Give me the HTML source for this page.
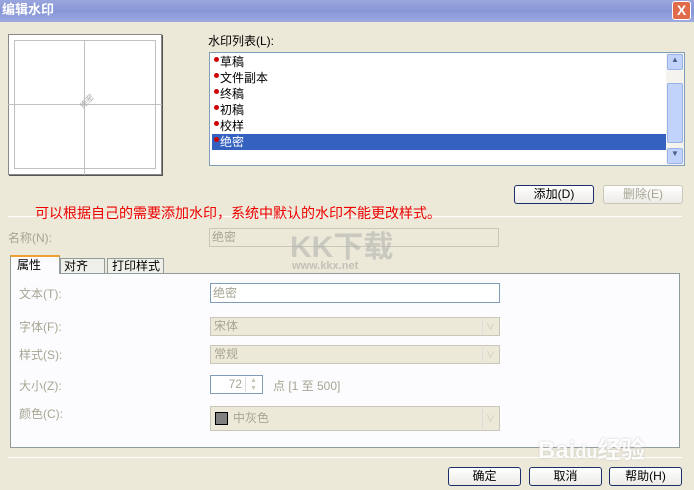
<!DOCTYPE html>
<html><head><meta charset="utf-8"><style>
*{margin:0;padding:0;box-sizing:border-box}
body{width:694px;height:490px;overflow:hidden;background:#ece9d8;font-family:"Liberation Sans","Noto Sans CJK SC",sans-serif;font-size:12px;color:#000;position:relative}
.a{position:absolute}
.title{left:0;top:0;width:694px;height:22px;background:linear-gradient(#9aa6dc,#8796d8 50%,#9eabe0);color:#fff;font-weight:bold;font-size:13px;line-height:20px;padding-left:2px}
.close{right:3px;top:1px;width:19px;height:19px;background:#e06a4a;border:1px solid #fff;border-radius:3px;color:#fff;font-size:14px;text-align:center;line-height:17px;font-weight:bold}
.btn{border:1px solid #1c2f6c;border-radius:3px;background:linear-gradient(#fff,#ecebe6);text-align:center;line-height:17px;font-size:12px}
.dis{color:#a7a593}
.in{border:1px solid #7f9db9;background:#fff}
.ind{border:1px solid #c9c7ba;background:#ece9d8;color:#a7a593}
.lbl{color:#a7a593}
.row{left:2px;height:16px;line-height:16px;padding-left:8px;width:456px}
.row:before{content:"";position:absolute;left:2px;top:3px;width:5px;height:5px;border-radius:50%;background:#c00}
.dd{position:absolute;right:1px;top:1px;bottom:1px;width:16px;border-left:1px solid #ddd;color:#c9c7ba;font-size:9px;text-align:center}
</style></head><body>
<div class="a title">编辑水印</div>
<div class="a close">X</div>

<div class="a" style="left:8px;top:34px;width:154px;height:141px;background:#fff;border:1px solid #888;box-shadow:1px 1px 0 #555"></div>
<div class="a" style="left:14px;top:40px;width:142px;height:129px;border:1px solid #c0c0c0"></div>
<div class="a" style="left:84px;top:40px;width:1px;height:135px;background:#c0c0c0"></div>
<div class="a" style="left:8px;top:104px;width:154px;height:1px;background:#c0c0c0"></div>
<div class="a" style="left:79px;top:96px;font-size:8px;color:#aaa;transform:rotate(-45deg)">绝密</div>

<div class="a" style="left:208px;top:32px">水印列表(L):</div>
<div class="a in" style="left:209px;top:52px;width:476px;height:114px">
 <div class="a row" style="top:1px">草稿</div>
 <div class="a row" style="top:17px">文件副本</div>
 <div class="a row" style="top:33px">终稿</div>
 <div class="a row" style="top:49px">初稿</div>
 <div class="a row" style="top:65px">校样</div>
 <div class="a row" style="top:81px;background:#3562c0;color:#fff">绝密</div>
 <div class="a" style="right:0;top:0;width:18px;height:112px;background:#f4f3ee"></div>
 <div class="a" style="right:1px;top:1px;width:16px;height:16px;background:#c1d3fb;border:1px solid #9bb2e8;border-radius:2px;font-size:8px;text-align:center;color:#4d6185">▲</div>
 <div class="a" style="right:1px;top:30px;width:16px;height:60px;background:#c1d3fb;border:1px solid #9bb2e8;border-radius:2px"></div>
 <div class="a" style="right:1px;top:95px;width:16px;height:16px;background:#c1d3fb;border:1px solid #9bb2e8;border-radius:2px;font-size:8px;text-align:center;color:#4d6185">▼</div>
</div>

<div class="a btn" style="left:514px;top:185px;width:80px;height:19px">添加(D)</div>
<div class="a btn dis" style="left:603px;top:185px;width:80px;height:19px;border-color:#c9c7ba">删除(E)</div>

<div class="a" style="left:8px;top:216px;width:674px;height:1px;background:#aca899;border-bottom:1px solid #fff"></div>
<div class="a" style="left:35px;top:203px;color:#e00;font-size:14px">可以根据自己的需要添加水印，系统中默认的水印不能更改样式。</div>

<div class="a lbl" style="left:8px;top:229px">名称(N):</div>
<div class="a ind" style="left:209px;top:228px;width:290px;height:19px;padding-left:2px;line-height:17px">绝密</div>
<div class="a" style="left:290px;top:222px;font-size:30px;font-weight:bold;color:#aaa;opacity:.5">KK下载</div>
<div class="a" style="left:292px;top:260px;font-size:11px;font-weight:bold;color:#c4c2b8">www.kkx.net</div>

<div class="a" style="left:10px;top:273px;width:670px;height:175px;background:#fcfcfe;border:1px solid #919b9c"></div>
<div class="a" style="left:10px;top:255px;width:50px;height:19px;background:#fcfcfe;border:1px solid #919b9c;border-bottom:none;border-top:2px solid #f0a030;padding-left:6px;line-height:17px">属性</div>
<div class="a" style="left:60px;top:258px;width:45px;height:15px;background:#f0f0ea;border:1px solid #919b9c;border-bottom:none;padding-left:3px;line-height:14px">对齐</div>
<div class="a" style="left:107px;top:258px;width:57px;height:15px;background:#f0f0ea;border:1px solid #919b9c;border-bottom:none;padding-left:4px;line-height:14px">打印样式</div>

<div class="a lbl" style="left:19px;top:285px">文本(T):</div>
<div class="a in" style="left:210px;top:283px;width:290px;height:20px;color:#a7a593;padding-left:2px;line-height:18px">绝密</div>
<div class="a lbl" style="left:19px;top:318px">字体(F):</div>
<div class="a ind" style="left:210px;top:317px;width:290px;height:19px;padding-left:3px;line-height:17px">宋体<div class="dd">∨</div></div>
<div class="a lbl" style="left:19px;top:346px">样式(S):</div>
<div class="a ind" style="left:210px;top:345px;width:290px;height:19px;padding-left:3px;line-height:17px">常规<div class="dd">∨</div></div>
<div class="a lbl" style="left:19px;top:377px">大小(Z):</div>
<div class="a in" style="left:210px;top:375px;width:53px;height:19px;color:#a7a593;text-align:right;padding-right:20px;line-height:17px">72<div class="dd" style="font-size:7px;line-height:8px">▲<br>▼</div></div>
<div class="a lbl" style="left:273px;top:377px">点 [1 至 500]</div>
<div class="a lbl" style="left:19px;top:405px">颜色(C):</div>
<div class="a ind" style="left:210px;top:406px;width:290px;height:25px;padding-left:22px;line-height:23px">中灰色<div class="dd">∨</div><div class="a" style="left:4px;top:5px;width:13px;height:13px;background:#808080;border:1px solid #000"></div></div>

<div class="a" style="left:8px;top:457px;width:674px;height:1px;background:#aca899;border-bottom:1px solid #fff"></div>
<div class="a btn" style="left:448px;top:467px;width:73px;height:19px">确定</div>
<div class="a btn" style="left:529px;top:467px;width:73px;height:19px">取消</div>
<div class="a btn" style="left:609px;top:467px;width:73px;height:19px">帮助(H)</div>
<div class="a" style="left:538px;top:430px;font-size:24px;font-weight:bold;color:#fff;opacity:.85;text-shadow:0 0 2px #bbb">Bai<span style="font-size:18px">du</span>经验</div>
</body></html>
